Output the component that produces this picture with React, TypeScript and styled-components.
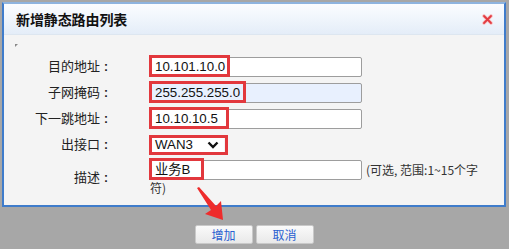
import React from 'react'
import styled, { createGlobalStyle } from 'styled-components'

const GlobalStyle = createGlobalStyle`
  html, body {
    margin: 0;
    padding: 0;
    background: #a7a7a7;
    font-family: "Liberation Sans", Arial, "Noto Sans CJK SC", sans-serif;
  }
`

const rows = [
  { label: '目的地址', value: '10.101.10.0', mark: 81, filled: false },
  { label: '子网掩码', value: '255.255.255.0', mark: 97, filled: true },
  { label: '下一跳地址', value: '10.10.10.5', mark: 80, filled: false },
]

const CloseIcon = () => (
  <svg width="11" height="11" viewBox="0 0 11 11">
    <path d="M2 2 L9 9 M9 2 L2 9" stroke="#f7c0c2" strokeWidth="3.6" strokeLinecap="round" />
    <path d="M2 2 L9 9 M9 2 L2 9" stroke="#e23a40" strokeWidth="1.8" strokeLinecap="round" />
  </svg>
)

const App = () => {
  return (
    <Page>
      <GlobalStyle />
      <Dialog>
        <TitleBar>
          <Title>新增静态路由列表</Title>
          <CloseIcon />
        </TitleBar>
        <Body>
          <Corner />
          <Form>
            {rows.map((r) => (
              <React.Fragment key={r.label}>
                <Label>
                  {r.label}
                  <Colon>:</Colon>
                </Label>
                <Field>
                  <TextInput $filled={r.filled}>{r.value}</TextInput>
                  <Mark style={{ width: r.mark }} />
                </Field>
              </React.Fragment>
            ))}
            <Label>
              出接口<Colon>:</Colon>
            </Label>
            <Field>
              <Select>
                WAN3
                <svg width="12" height="8" viewBox="0 0 12 8">
                  <path d="M1.5 1.5 L6 6 L10.5 1.5" stroke="#111" strokeWidth="2.4" fill="none" />
                </svg>
              </Select>
              <Mark style={{ width: 79, top: -1, height: 20 }} />
            </Field>
            <DescLabel>
              描述<Colon>:</Colon>
            </DescLabel>
            <DescCell>
              <DescLine>
                <Field>
                  <TextInput>业务B</TextInput>
                  <Mark style={{ width: 55 }} />
                </Field>
                <Hint>(可选, 范围:1~15个字</Hint>
              </DescLine>
              <Wrap>符)</Wrap>
            </DescCell>
          </Form>
        </Body>
      </Dialog>
      <Footer>
        <Button>增加</Button>
        <Button>取消</Button>
        <Arrow width="36" height="40" viewBox="0 0 36 40">
          <path d="M1 2 L3 1 L20 20 L25 15 L27 34 L9 28 L15 24 Z" fill="#ee2c2c" />
        </Arrow>
      </Footer>
    </Page>
  )
}

const Page = styled.div`
  width: 509px;
  height: 249px;
  padding: 2px 3px 0 2px;
  box-sizing: border-box;
  position: relative;
`
const Dialog = styled.div`
  height: 205px;
  box-sizing: border-box;
  border: 2px solid #3f7ccb;
  border-top-color: #8eb4df;
  background: #f4f4f4;
  display: flex;
  flex-direction: column;
`
const TitleBar = styled.div`
  height: 30px;
  flex: none;
  display: flex;
  align-items: center;
  justify-content: space-between;
  padding: 0 11px 0 12px;
  background: linear-gradient(#fbfdff, #e4edf8);
  border-bottom: 1px solid #dde6f0;
`
const Title = styled.h1`
  margin: 0;
  font-family: "Noto Sans CJK SC", sans-serif;
  font-size: 14px;
  font-weight: 700;
  letter-spacing: -0.1px;
  color: #111;
`
const Body = styled.div`
  flex: 1;
  padding: 9px 0 0 10px;
`
const Corner = styled.div`
  width: 0;
  height: 0;
  border-top: 3px solid #888;
  border-right: 3px solid transparent;
  margin-left: 1px;
`
const Form = styled.div`
  display: grid;
  grid-template-columns: 98px 1fr;
  column-gap: 38px;
  row-gap: 5px;
  margin-top: 9px;
  align-items: center;
`
const Label = styled.div`
  text-align: right;
  font-family: "Noto Sans CJK SC", sans-serif;
  font-size: 13px;
  color: #222;
  line-height: 20px;
`
const DescLabel = styled(Label)`
  align-self: start;
  padding-top: 7px;
`
const Colon = styled.span`
  display: inline-block;
  width: 12px;
  text-align: center;
  font-family: "Liberation Sans", Arial, sans-serif;
  font-weight: 700;
  font-size: 12px;
`
const Field = styled.div`
  position: relative;
  flex: none;
`
const TextInput = styled.div<{ $filled?: boolean }>`
  width: 212px;
  height: 20px;
  box-sizing: border-box;
  border: 1px solid #9d9d9d;
  border-radius: 2px;
  background: ${({ $filled }) => ($filled ? '#e8f0fe' : '#fff')};
  padding: 0 4px;
  font-size: 13.3px;
  line-height: 18px;
  color: #111;
  font-family: "Liberation Sans", Arial, "Noto Sans CJK SC", sans-serif;
`
const Select = styled.div`
  width: 72px;
  height: 18px;
  margin: 0 0 0 2px;
  box-sizing: border-box;
  display: flex;
  align-items: center;
  justify-content: space-between;
  padding: 0 5px 0 3px;
  background: #fff;
  font-size: 13.3px;
  color: #111;
`
const Mark = styled.span`
  position: absolute;
  left: -1px;
  top: -2px;
  height: 22px;
  box-sizing: border-box;
  border: 3px solid #e2383d;
  pointer-events: none;
`
const DescCell = styled.div`
  display: flex;
  flex-direction: column;
`
const DescLine = styled.div`
  display: flex;
  align-items: center;
  height: 20px;
`
const Hint = styled.span`
  margin-left: 4px;
  font-family: "Noto Sans CJK SC", sans-serif;
  font-size: 12px;
  line-height: 20px;
  color: #333;
`
const Wrap = styled.div`
  font-family: "Noto Sans CJK SC", sans-serif;
  font-size: 12px;
  line-height: 16px;
  color: #333;
`
const Footer = styled.div`
  display: flex;
  justify-content: center;
  gap: 3px;
  padding: 18px 0 0 0;
`
const Button = styled.button`
  width: 58px;
  height: 19px;
  padding: 0;
  border: 1px solid #c9c9c9;
  border-radius: 2px;
  background: linear-gradient(#fafafa, #e9e9e9);
  font-family: "Noto Sans CJK SC", sans-serif;
  font-size: 12px;
  color: #2a5fd0;
  line-height: 17px;
`
const Arrow = styled.svg`
  position: absolute;
  left: 196px;
  top: 186px;
`

export default App
